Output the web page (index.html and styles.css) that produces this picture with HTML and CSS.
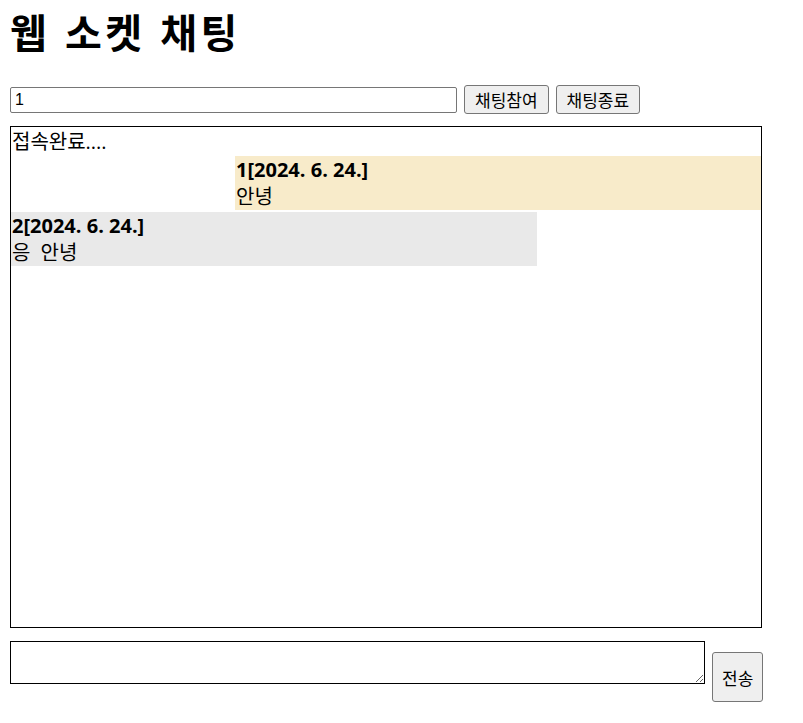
FILE: index.html
```html
<!DOCTYPE html>
<html lang="ko">
<head>
    <meta charset="UTF-8">
    <meta name="viewport" content="width=device-width, initial-scale=1.0">
    <title>웹 소켓 채팅</title>
    <link rel="stylesheet" href="styles.css">
</head>
<body>
    <h1>웹 소켓 채팅</h1>

    <!-- 접속 -->
    <div class="join-bar">
        <input type="text" id="userName" class="user-input" value="1">
        <button id="joinBtn" class="btn">채팅참여</button>
        <button id="exitBtn" class="btn">채팅종료</button>
    </div>

    <!-- 채팅 영역 -->
    <div id="chatArea" class="chat-area">
        <div class="notice">접속완료....</div>
        <div class="msg mine">
            <div class="msg-head">1[2024. 6. 24.]</div>
            <div class="msg-body">안녕</div>
        </div>
        <div class="msg other">
            <div class="msg-head">2[2024. 6. 24.]</div>
            <div class="msg-body">응 안녕</div>
        </div>
    </div>

    <!-- 전송 -->
    <div class="send-bar">
        <textarea id="message" class="message-input"></textarea>
        <button id="sendBtn" class="btn send-btn">전송</button>
    </div>
</body>
</html>
```

FILE: styles.css
```css
body {
    margin: 0;
    padding: 0 10px;
    font-family: "Open Sans", "Noto Sans CJK KR", sans-serif;
    color: #000;
    background: #fff;
}
h1 {
    margin: 0;
    padding-top: 4px;
    font-family: "Noto Sans CJK KR", sans-serif;
    font-size: 40px;
    line-height: 54px;
    letter-spacing: 3.5px;
    font-weight: bold;
}
.join-bar {
    display: flex;
    align-items: center;
    gap: 7px;
    margin-top: 27px;
}
.user-input {
    width: 447px;
    height: 26px;
    box-sizing: border-box;
    border: 1px solid #767676;
    border-radius: 2px;
    padding: 0 4px;
    font-family: "Liberation Sans", Arial, sans-serif;
    font-size: 16px;
}
.btn {
    height: 29px;
    box-sizing: border-box;
    padding: 0 10px;
    background: #efefef;
    border: 1px solid #767676;
    border-radius: 3px;
    font-family: "Noto Sans CJK KR", sans-serif;
    font-size: 17px;
    line-height: 1;
    color: #000;
}
.chat-area {
    width: 752px;
    height: 502px;
    box-sizing: border-box;
    margin-top: 12px;
    border: 1px solid #000;
    overflow-y: auto;
    font-size: 20px;
    line-height: 27px;
}
.notice {
    padding-left: 1px;
    height: 29px;
    line-height: 30px;
}
.msg {
    width: 526px;
    margin-bottom: 2px;
    padding-left: 1px;
    box-sizing: border-box;
}
.msg-head {
    font-weight: bold;
}
.msg-body {
    word-spacing: 5px;
}
.mine {
    margin-left: auto;
    background: #f8ebca;
}
.other {
    background: #e9e9e9;
}
.send-bar {
    display: flex;
    align-items: flex-start;
    gap: 7px;
    margin-top: 13px;
}
.message-input {
    width: 695px;
    height: 43px;
    box-sizing: border-box;
    margin: 0;
    border: 1px solid #000;
    resize: both;
}
.send-btn {
    height: 50px;
    margin-top: 11px;
    padding: 0 9px;
}
```
